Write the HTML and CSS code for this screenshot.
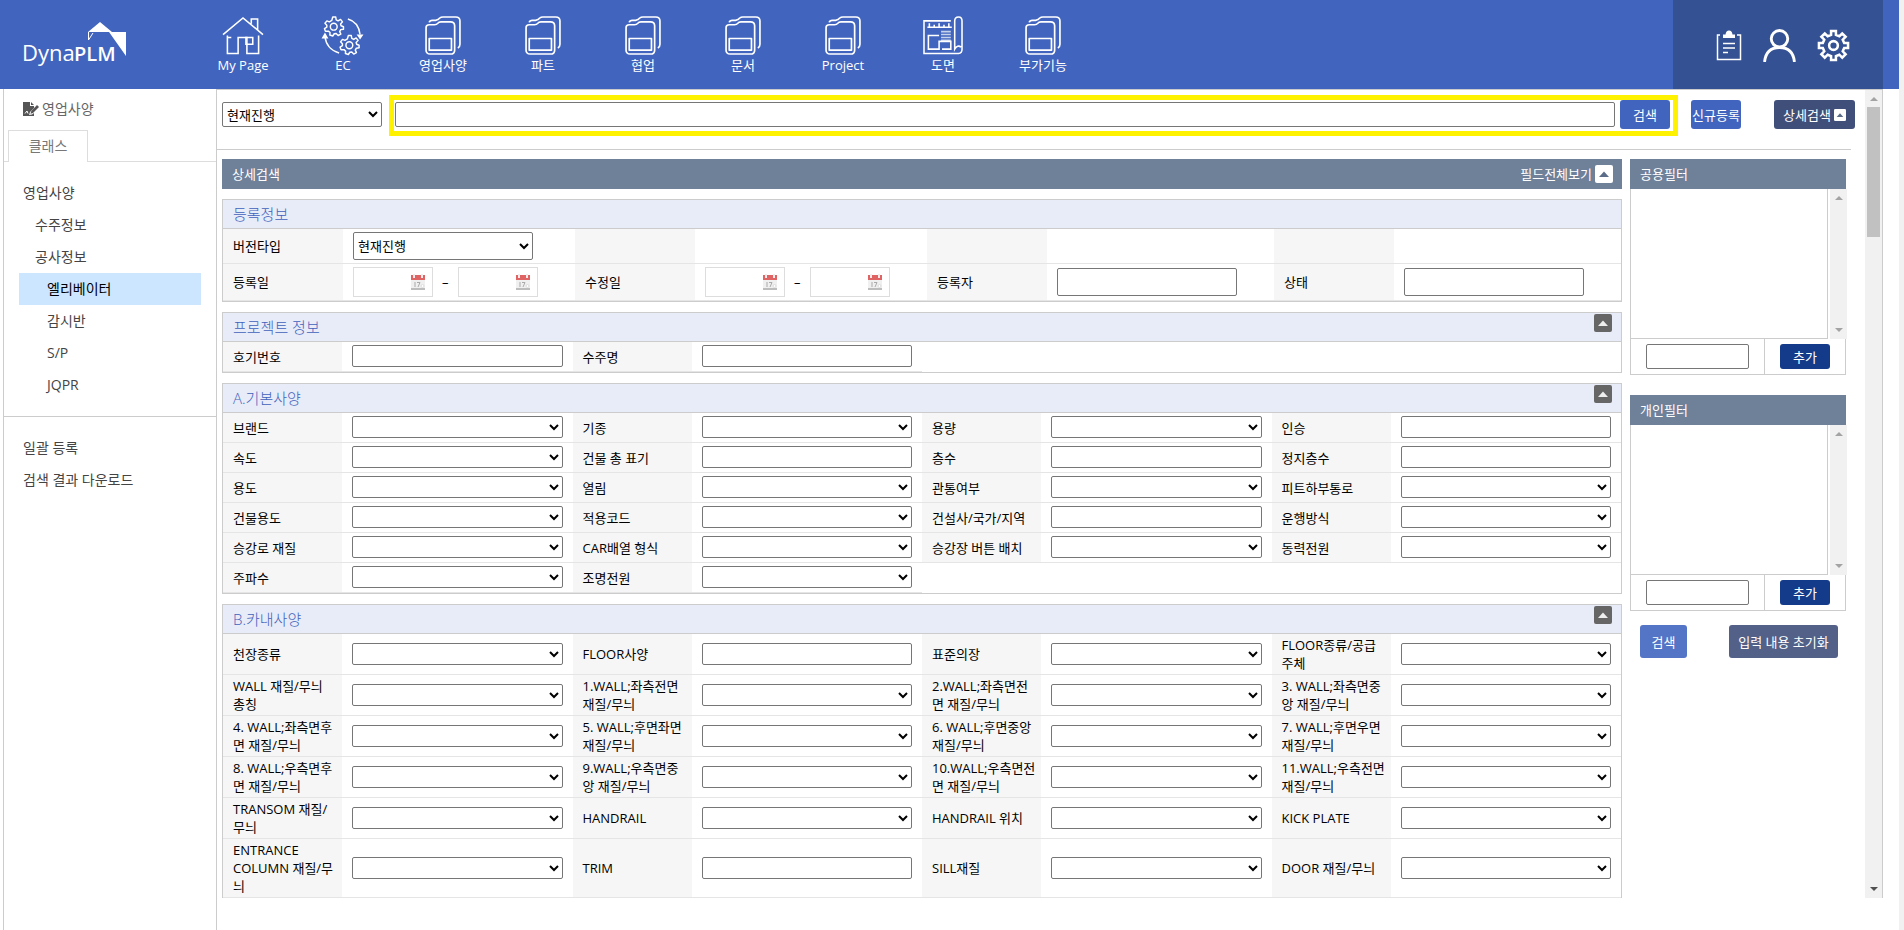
FILE: index.html
```html
<!DOCTYPE html>
<html lang="ko">
<head>
<meta charset="utf-8">
<title>DynaPLM</title>
<link rel="stylesheet" href="styles.css">
</head>
<body>
<svg class="defs" aria-hidden="true">
  <symbol id="folder" viewBox="2 0 34 40" preserveAspectRatio="none"><g fill="none" stroke="#fff" stroke-width="1.6" stroke-linejoin="round"><path d="M3 12 Q3 9 6 9 H11 Q13 9 14 7.500 Q15 6 17 6 H26 Q30 6 30 10 V35 Q30 39 26 39 H7 Q3 39 3 35 Z"/><path d="M6 6.500 Q6.500 4.500 9 4.500 H12 Q15 4 16 2 Q17 1 19 1 H31 Q35 1 35 5 V29 Q35 32 33 33"/><path d="M6 23 H27 V35 H6 Z"/></g></symbol>
  <symbol id="caret" viewBox="0 0 18 18"><rect width="18" height="18" rx="2" fill="currentColor"/><path class="caret-tip" d="M4 12 L9 6.500 L14 12 Z"/></symbol>
  <symbol id="calendar" viewBox="0 0 16 18"><rect x="1" y="2" width="14" height="14" fill="#f0f0f0"/><rect x="1" y="2" width="14" height="5" fill="#e06464"/><rect x="1" y="15" width="14" height="2" fill="#bdbdbd"/><path d="M4 1 V5 M12 1 V5" stroke="#eee" stroke-width="2"/><path d="M5 9 V14 M7 9.500 H10 L8 14" fill="none" stroke="#aaa"/><circle cx="12.500" cy="13" r="1.500" fill="#fff" stroke="#ddd"/></symbol>
</svg>

<header class="topbar">
  <a class="logo" href="#" aria-label="DynaPLM">
    <svg viewBox="0 0 110 48" width="110" height="48">
      <text x="1" y="40" class="logo-thin">Dyna</text><text x="53" y="40" class="logo-bold">PLM</text>
      <path d="M67 11 L79 1 L91 11 Z M88 11 H105 V35 Z" fill="#fff"/><path d="M67.500 11 V19 L72 12" fill="none" stroke="#fff"/>
    </svg>
  </a>
  <nav class="menu">
    <a href="#"><svg viewBox="0 0 42 40"><g fill="none" stroke="#fff" stroke-width="1.600"><path d="M0.500 19 L21 2 L41.500 19 M29.500 8 V3 H36 V14 M5 20 V38.500 H16 V22 H25 V38.500 H37 V20 M5 22 H9"/><path d="M24 22 H31 V29 H24 Z"/></g></svg>My Page</a>
    <a href="#"><svg viewBox="0 0 42 40"><g fill="none" stroke="#fff" stroke-width="1.500" stroke-linejoin="round"><path id="cog" d="M10.500 1 H13.500 L14 4 L16 5 L18.500 3.500 L20.500 6 L18.500 8.200 L19 10 L21.500 11 V13.500 L18.700 14 L17.600 16 L18.800 18.500 L16 20 L14 18 L12 18.200 L10.500 20.500 L7.500 19.500 L7.700 17 L6 15.500 L3 15.700 L2 13 L4.400 11.500 V9.500 L2.500 7.500 L4.500 5 L7 6 L9.500 4.500 Z"/><circle cx="11.500" cy="11" r="3.500"/><use href="#cog" transform="translate(16 19)"/><circle cx="27.500" cy="30" r="3.500"/><path d="M26 3 Q37 6 38.500 19"/><path d="M17 38 Q4 34 2.500 21"/></g><path d="M35 19 H42 L38.500 24 Z M-1 23 H6 L2.500 17 Z" fill="#fff"/></svg>EC</a>
    <a href="#"><svg class="folder"><use href="#folder"/></svg>영업사양</a>
    <a href="#"><svg class="folder"><use href="#folder"/></svg>파트</a>
    <a href="#"><svg class="folder"><use href="#folder"/></svg>협업</a>
    <a href="#"><svg class="folder"><use href="#folder"/></svg>문서</a>
    <a href="#"><svg class="folder"><use href="#folder"/></svg>Project</a>
    <a href="#"><svg viewBox="0 0 42 40"><g fill="none" stroke="#fff" stroke-width="1.600"><path d="M29 5 H1.500 V38.500 H37 Q40.500 38 40.500 34 V5 Q40.500 1 37 1 Q33 1 33 5 V34 Q36 29 39.500 32"/><path d="M5 11.500 H30 M7 11 V7.500 M12 11 V9 M17 11 V7.500 M22 11 V9 M27 11 V7.500 M17 20 H6 V34 H17 V26 H29 V34 H20 M17 26 V29"/><path d="M19 16 H29 M19 19 H29 M19 22 H29 M19 25 H29" stroke-opacity=".7"/></g></svg>도면</a>
    <a href="#"><svg class="folder"><use href="#folder"/></svg>부가기능</a>
  </nav>
  <div class="tools">
    <button type="button" aria-label="작업 목록"><svg viewBox="0 0 26 32"><path d="M4 5.500 H1.500 V30 H24.500 V5.500 H21 M7 14 H19 M7 18.500 H19 M7 23 H12" fill="none" stroke="#fff" stroke-width="1.500"/><path d="M7 8.500 V5 H9.500 Q10 1 13 1 Q16 1 16.500 5 H19 V8.500 Z" fill="#fff"/></svg></button>
    <button type="button" aria-label="사용자"><svg viewBox="0 0 32 32"><g fill="none" stroke="#fff" stroke-width="2.800"><circle cx="16" cy="9.500" r="8"/><path d="M1.500 32 Q3 18 16 18 Q29 18 30.500 32"/></g></svg></button>
    <button type="button" aria-label="설정"><svg viewBox="0 0 34 34"><g fill="none" stroke="#fff" stroke-width="2.600"><path d="M14.500 2 H19.500 V6 L23 7.500 L26 4.700 L29.500 8 L26.500 11 L28 14.500 H32 V19.500 H28 L26.500 23 L29.500 26 L26 29.500 L23 26.500 L19.500 28 V32 H14.500 V28 L11 26.500 L8 29.500 L4.500 26 L7.500 23 L6 19.500 H2 V14.500 H6 L7.500 11 L4.500 8 L8 4.700 L11 7.500 L14.500 6 Z"/><circle cx="17" cy="17" r="4.500"/></g></svg></button>
  </div>
</header>

<div class="page">
  <aside class="side">
    <h1 class="side-title"><svg viewBox="0 0 16 14"><path d="M0 0 H7 V4 H11 V6 L7 10 L6 13 L9 12.500 L11 11 V14 H0 Z M8 0 L11 3 H8 Z" fill="#555"/><path d="M14 3 L16 5 L10 11 L7.500 11.700 L8.300 9 Z" fill="#555"/><path d="M2 11.500 L4 9 L5 11.500" fill="none" stroke="#fff"/></svg>영업사양</h1>
    <div class="tabs"><button type="button" class="tab">클래스</button></div>
    <ul class="tree">
      <li><a href="#">영업사양</a></li>
      <li><a class="lv2" href="#">수주정보</a></li>
      <li><a class="lv2" href="#">공사정보</a></li>
      <li><a class="lv3 current" href="#">엘리베이터</a></li>
      <li><a class="lv3" href="#">감시반</a></li>
      <li><a class="lv3" href="#">S/P</a></li>
      <li><a class="lv3" href="#">JQPR</a></li>
    </ul>
    <ul class="tree links">
      <li><a href="#">일괄 등록</a></li>
      <li><a href="#">검색 결과 다운로드</a></li>
    </ul>
  </aside>

  <main class="main">
    <div class="content">
      <form class="searchbar">
        <select class="version" aria-label="버전"><option>현재진행</option></select>
        <div class="highlight"><input type="text" aria-label="검색어"><button type="button" class="btn">검색</button></div>
        <button type="button" class="btn new">신규등록</button>
        <button type="button" class="btn detail">상세검색<svg><use href="#caret"/></svg></button>
      </form>

      <div class="columns">
        <div class="fields">
          <div class="bar">상세검색<button type="button" class="all">필드전체보기<svg><use href="#caret"/></svg></button></div>

          <section class="group">
            <h2>등록정보</h2>
            <div class="grid reg">
              <div class="f"><label for="r1">버전타입</label><span><select id="r1"><option>현재진행</option></select></span></div>
              <div class="f"><b></b></div>
              <div class="f"><b></b></div>
              <div class="f"><b></b></div>
              <div class="f"><label for="r2">등록일</label><span class="dates"><i><input id="r2" type="text"><svg><use href="#calendar"/></svg></i>–<i><input type="text" aria-label="등록일 종료"><svg><use href="#calendar"/></svg></i></span></div>
              <div class="f"><label for="r3">수정일</label><span class="dates"><i><input id="r3" type="text"><svg><use href="#calendar"/></svg></i>–<i><input type="text" aria-label="수정일 종료"><svg><use href="#calendar"/></svg></i></span></div>
              <div class="f"><label for="r4">등록자</label><span><input id="r4" type="text"></span></div>
              <div class="f"><label for="r5">상태</label><span><input id="r5" type="text"></span></div>
            </div>
          </section>

          <section class="group">
            <h2>프로젝트 정보<button type="button" class="fold" aria-label="접기"><svg><use href="#caret"/></svg></button></h2>
            <div class="grid">
              <div class="f"><label for="p1">호기번호</label><span><input id="p1" type="text"></span></div>
              <div class="f"><label for="p2">수주명</label><span><input id="p2" type="text"></span></div>
            </div>
          </section>

          <section class="group">
            <h2>A.기본사양<button type="button" class="fold" aria-label="접기"><svg><use href="#caret"/></svg></button></h2>
            <div class="grid">
              <div class="f"><label for="a1">브랜드</label><span><select id="a1"></select></span></div>
              <div class="f"><label for="a2">기종</label><span><select id="a2"></select></span></div>
              <div class="f"><label for="a3">용량</label><span><select id="a3"></select></span></div>
              <div class="f"><label for="a4">인승</label><span><input id="a4" type="text"></span></div>
              <div class="f"><label for="a5">속도</label><span><select id="a5"></select></span></div>
              <div class="f"><label for="a6">건물 총 표기</label><span><input id="a6" type="text"></span></div>
              <div class="f"><label for="a7">층수</label><span><input id="a7" type="text"></span></div>
              <div class="f"><label for="a8">정지층수</label><span><input id="a8" type="text"></span></div>
              <div class="f"><label for="a9">용도</label><span><select id="a9"></select></span></div>
              <div class="f"><label for="a10">열림</label><span><select id="a10"></select></span></div>
              <div class="f"><label for="a11">관통여부</label><span><select id="a11"></select></span></div>
              <div class="f"><label for="a12">피트하부통로</label><span><select id="a12"></select></span></div>
              <div class="f"><label for="a13">건물용도</label><span><select id="a13"></select></span></div>
              <div class="f"><label for="a14">적용코드</label><span><select id="a14"></select></span></div>
              <div class="f"><label for="a15">건설사/국가/지역</label><span><input id="a15" type="text"></span></div>
              <div class="f"><label for="a16">운행방식</label><span><select id="a16"></select></span></div>
              <div class="f"><label for="a17">승강로 재질</label><span><select id="a17"></select></span></div>
              <div class="f"><label for="a18">CAR배열 형식</label><span><select id="a18"></select></span></div>
              <div class="f"><label for="a19">승강장 버튼 배치</label><span><select id="a19"></select></span></div>
              <div class="f"><label for="a20">동력전원</label><span><select id="a20"></select></span></div>
              <div class="f"><label for="a21">주파수</label><span><select id="a21"></select></span></div>
              <div class="f"><label for="a22">조명전원</label><span><select id="a22"></select></span></div>
            </div>
          </section>

          <section class="group open">
            <h2>B.카내사양<button type="button" class="fold" aria-label="접기"><svg><use href="#caret"/></svg></button></h2>
            <div class="grid">
              <div class="f"><label for="b1">천장종류</label><span><select id="b1"></select></span></div>
              <div class="f"><label for="b2">FLOOR사양</label><span><input id="b2" type="text"></span></div>
              <div class="f"><label for="b3">표준의장</label><span><select id="b3"></select></span></div>
              <div class="f"><label for="b4">FLOOR종류/공급<br>주체</label><span><select id="b4"></select></span></div>
              <div class="f"><label for="b5">WALL 재질/무늬<br>총칭</label><span><select id="b5"></select></span></div>
              <div class="f"><label for="b6">1.WALL;좌측전면 재질/무늬</label><span><select id="b6"></select></span></div>
              <div class="f"><label for="b7">2.WALL;좌측면전<br>면 재질/무늬</label><span><select id="b7"></select></span></div>
              <div class="f"><label for="b8">3. WALL;좌측면중<br>앙 재질/무늬</label><span><select id="b8"></select></span></div>
              <div class="f"><label for="b9">4. WALL;좌측면후<br>면 재질/무늬</label><span><select id="b9"></select></span></div>
              <div class="f"><label for="b10">5. WALL;후면좌면 재질/무늬</label><span><select id="b10"></select></span></div>
              <div class="f"><label for="b11">6. WALL;후면중앙 재질/무늬</label><span><select id="b11"></select></span></div>
              <div class="f"><label for="b12">7. WALL;후면우면 재질/무늬</label><span><select id="b12"></select></span></div>
              <div class="f"><label for="b13">8. WALL;우측면후<br>면 재질/무늬</label><span><select id="b13"></select></span></div>
              <div class="f"><label for="b14">9.WALL;우측면중<br>앙 재질/무늬</label><span><select id="b14"></select></span></div>
              <div class="f"><label for="b15">10.WALL;우측면전<br>면 재질/무늬</label><span><select id="b15"></select></span></div>
              <div class="f"><label for="b16">11.WALL;우측전면<br>재질/무늬</label><span><select id="b16"></select></span></div>
              <div class="f"><label for="b17">TRANSOM 재질/<br>무늬</label><span><select id="b17"></select></span></div>
              <div class="f"><label for="b18">HANDRAIL</label><span><select id="b18"></select></span></div>
              <div class="f"><label for="b19">HANDRAIL 위치</label><span><select id="b19"></select></span></div>
              <div class="f"><label for="b20">KICK PLATE</label><span><select id="b20"></select></span></div>
              <div class="f"><label for="b21">ENTRANCE<br>COLUMN 재질/무<br>늬</label><span><select id="b21"></select></span></div>
              <div class="f"><label for="b22">TRIM</label><span><input id="b22" type="text"></span></div>
              <div class="f"><label for="b23">SILL재질</label><span><select id="b23"></select></span></div>
              <div class="f"><label for="b24">DOOR 재질/무늬</label><span><select id="b24"></select></span></div>
            </div>
          </section>
        </div>

        <div class="filters">
          <section class="filter">
            <h2 class="bar">공용필터</h2>
            <div class="list"><div class="items"></div><div class="scroll idle"><i class="up"></i><i class="down"></i></div></div>
            <div class="add"><span><input type="text" aria-label="공용필터 이름"></span><button type="button">추가</button></div>
          </section>
          <section class="filter">
            <h2 class="bar">개인필터</h2>
            <div class="list"><div class="items"></div><div class="scroll idle"><i class="up"></i><i class="down"></i></div></div>
            <div class="add"><span><input type="text" aria-label="개인필터 이름"></span><button type="button">추가</button></div>
          </section>
          <div class="actions"><button type="button" class="find">검색</button><button type="button" class="reset">입력 내용 초기화</button></div>
        </div>
      </div>
    </div>
    <div class="scroll"><i class="up"></i><div class="thumb"></div><i class="down"></i></div>
  </main>
</div>
</body>
</html>
```
FILE: styles.css
```css
* { box-sizing: border-box; }

html { height: 100%; background: #f1f1f1; }

body {
  display: flex;
  flex-direction: column;
  min-height: 100vh;
  margin: 0 5px 0 0;
  background: #fff;
  color: #000;
  font: 13px/18px "Open Sans", "Noto Sans CJK KR", sans-serif;
}

h1, h2, ul { margin: 0; padding: 0; font-weight: 400; list-style: none; }
a { color: inherit; text-decoration: none; }
button, input, select { font: inherit; color: inherit; }
button { padding: 0; border: 0; background: none; cursor: pointer; }
.defs { display: none; }

/* Top bar */
.topbar { display: flex; height: 89px; padding-right: 16px; background: #4165be; color: #fff; }
.logo { width: 193px; padding: 21px 0 0 21px; }
.logo text { fill: #fff; font-family: "Open Sans", sans-serif; }
.logo-thin { font-size: 22px; font-weight: 400; }
.logo-bold { font-size: 20px; font-weight: 600; }
.menu { display: flex; flex: 1; }
.menu a { display: flex; flex-direction: column; align-items: center; gap: 1px; width: 100px; padding-top: 16px; }
.menu svg { width: 42px; height: 39px; overflow: visible; }
.menu .folder { width: 36px; }
.tools { display: flex; align-items: center; gap: 21px; width: 210px; padding: 2px 0 0 43px; background: #345193; }
.tools button { display: flex; }
.tools svg { width: 33px; height: 33px; }
.tools button:first-child svg { width: 26px; }

/* Side navigation */
.page { display: flex; flex: 1; padding-right: 16px; }
.side { width: 214px; margin-left: 3px; border: solid #ccc; border-width: 0 1px; }
.side-title { display: flex; align-items: center; gap: 3px; height: 41px; padding: 0 0 2px 19px; color: #666; font-size: 14px; }
.side-title svg { width: 16px; height: 14px; }
.tabs { display: flex; height: 32px; padding-left: 4px; border-bottom: 1px solid #ddd; }
.tab { width: 80px; height: 32px; padding-bottom: 2px; border: solid #ddd; border-width: 1px 1px 0; background: #fff; color: #777; font-size: 14px; }
.tree { padding: 15px 15px; color: #444; font-size: 14px; }
.tree a { display: block; padding-left: 4px; line-height: 32px; }
.tree .lv2 { padding-left: 16px; }
.tree .lv3 { padding-left: 28px; }
.tree .current { background: #cce6ff; color: #000; }
.links { border-top: 1px solid #ccc; }

/* Main area */
.main { display: flex; flex: 1; align-self: flex-start; min-width: 0; border: solid #ccc; border-width: 1px 1px 0 0; }
.content { flex: 1; min-width: 0; }
input, select { border: 1px solid #767676; border-radius: 2px; background: #fff; }
.searchbar { display: flex; align-items: flex-start; height: 60px; margin-right: 14px; padding: 5px 0 0 5px; border-bottom: 1px solid #ccc; }
.version { width: 160px; height: 25px; margin: 7px 7px 0 0; }
.highlight { display: flex; flex: 1; align-items: flex-start; gap: 5px; height: 41px; padding: 0 3px 0 1px; border: 5px solid #fff200; }
.highlight input { flex: 1; height: 25px; margin-top: 2px; }
.btn { width: 50px; height: 29px; border-radius: 3px; background: #4165be; color: #fff; }
.btn.new { margin: 5px 33px 0 13px; white-space: nowrap; }
.btn.detail { display: flex; align-items: center; justify-content: center; gap: 3px; width: 81px; margin: 5px -4px 0 0; background: #404f7a; }
.detail svg { width: 12px; height: 12px; }
.caret-tip { fill: var(--tip, #eee); }
.bar { display: flex; align-items: center; justify-content: space-between; height: 30px; padding: 0 9px 0 10px; background: #6f8099; color: #fff; font-size: 13px; }
.all { display: flex; align-items: center; gap: 3px; }
.all svg { width: 18px; height: 18px; }
.all svg, .detail svg { --tip: #5b6c88; color: #fff; }
.columns { display: flex; gap: 8px; padding: 9px 19px 0 5px; }
.fields { flex: 1; min-width: 0; }

/* Field groups */
.group { margin-top: 10px; border: 1px solid #ccc; }
.group.open { border-bottom: 0; }
.group h2 { display: flex; align-items: center; justify-content: space-between; height: 29px; padding: 0 9px 0 10px; border-bottom: 1px solid #ccc; background: #e8ebf8; color: #3f62bb; font-size: 15px; font-weight: 300; }
.fold { align-self: flex-start; padding-top: 1px; color: #666; }
.fold svg { display: block; width: 18px; height: 18px; }
.grid { display: grid; grid-template-columns: repeat(4, 1fr); }
.f { display: flex; min-height: 30px; border-bottom: 1px solid #e5e5e5; }
.f label, .f b { display: flex; flex-direction: column; justify-content: center; width: 119px; flex: none; padding: 2px 4px 2px 10px; background: #f6f6f6; }
.f span { display: flex; flex: 1; align-items: center; padding: 0 10px 1px; }
.f span > input, .f span > select { width: 100%; height: 22px; }
.reg { grid-template-columns: 352fr 352fr 347fr 347fr; }
.reg .f { min-height: 35px; }
.reg .f:nth-child(n+5) { min-height: 37px; }
.reg label, .reg b { width: 120px; }
.reg span > input, .reg span > select { width: 180px; height: 28px; }
.dates { gap: 9px; }
.dates i { display: flex; align-items: center; justify-content: flex-end; width: 80px; height: 30px; padding-right: 6px; border: 1px solid #ddd; }
.dates input { flex: 1; min-width: 0; height: 26px; border: 0; }
.dates svg { width: 16px; height: 18px; }

/* Filters */
.filters { width: 216px; }
.filter { margin-bottom: 20px; }
.list { display: flex; gap: 2px; height: 150px; margin-right: -1px; }
.items { flex: 1; border: solid #ccc; border-width: 0 1px 1px; }
.add { display: flex; height: 36px; border: solid #ccc; border-width: 0 1px 1px; }
.add span { flex: 1; padding: 5px 15px; border-right: 1px solid #ccc; }
.add input { width: 100%; height: 25px; }
.add button { width: 50px; height: 25px; margin: 5px 15px; border-radius: 3px; background: #143a8a; color: #fff; }
.actions { display: flex; justify-content: space-between; margin-top: -6px; padding: 0 8px 0 10px; }
.actions button { height: 33px; border-radius: 3px; color: #fff; }
.find { width: 47px; background: #5474c5; }
.reset { width: 109px; background: #536188; }

/* Scroll tracks */
.scroll { display: flex; flex-direction: column; align-items: center; width: 17px; padding: 7px 0; background: #f1f1f1; }
.up { border: 4px solid transparent; border-top: 0; border-bottom-color: #a3a3a3; }
.down { margin-top: auto; border: 4px solid transparent; border-bottom: 0; border-top-color: #505050; }
.idle .down { border-top-color: #a3a3a3; }
.thumb { width: 13px; height: 130px; margin-top: 6px; background: #c1c1c1; }
```
